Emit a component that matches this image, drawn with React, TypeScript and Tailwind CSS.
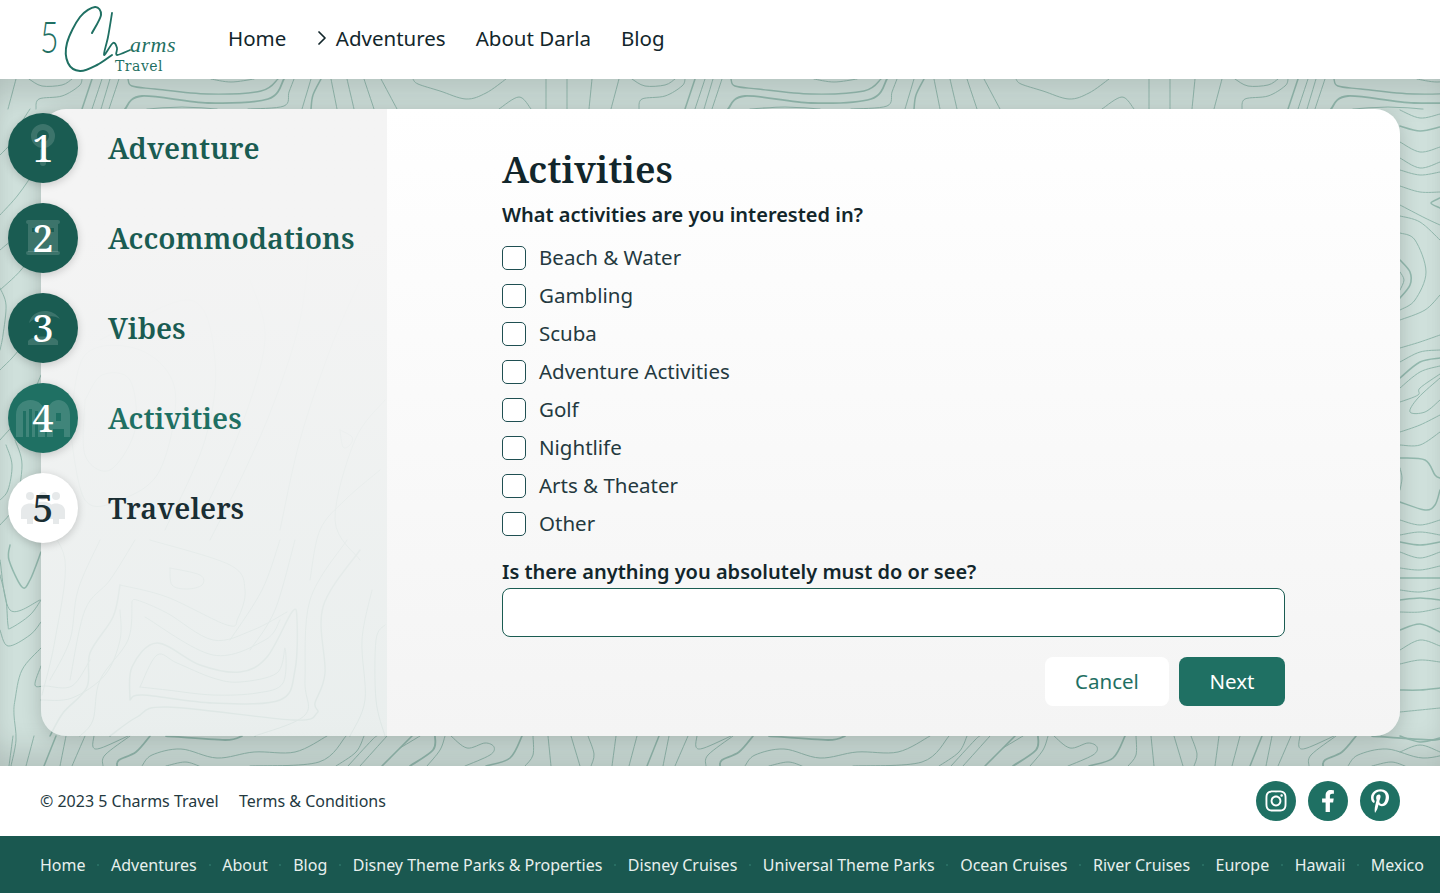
import { ChevronRight } from "lucide-react";
import { FaFacebookF, FaInstagram, FaPinterestP } from "react-icons/fa";

type Contour = [number, number[]];

// catmull-rom through the traced points, page coordinates
const smooth = (p: number[]) => {
  let d = `M${p[0]} ${p[1]}`;
  for (let i = 0; i < p.length - 2; i += 2) {
    const x0 = p[i - 2] ?? p[i];
    const y0 = p[i - 1] ?? p[i + 1];
    const x1 = p[i];
    const y1 = p[i + 1];
    const x2 = p[i + 2];
    const y2 = p[i + 3];
    const x3 = p[i + 4] ?? x2;
    const y3 = p[i + 5] ?? y2;
    d += `C${x1 + (x2 - x0) / 6} ${y1 + (y2 - y0) / 6} ${x2 - (x3 - x1) / 6} ${y2 - (y3 - y1) / 6} ${x2} ${y2}`;
  }
  return d;
};

// repeats every 603px across the page
const tile: Contour[] = [
  [1, [413, 79, 418, 84, 440, 91, 466, 99, 486, 93, 506, 79]],
  [1, [499, 109, 519, 97, 531, 109]],
  [1, [546, 79, 546, 109]],
  [1, [567, 79, 567, 109]],
  [1, [592, 79, 589, 109]],
  [1, [619, 79, 611, 109]],
  [1, [632, 79, 645, 86, 665, 85, 675, 79]],
  [1, [639, 109, 642, 99, 665, 96, 682, 86, 685, 79]],
  [1.5, [685, 109, 695, 79]],
  [1, [695, 109, 705, 79]],
  [1, [704, 109, 713, 79]],
  [1, [712, 109, 722, 79]],
  [1.4, [731, 79, 735, 86, 758, 89, 811, 94, 864, 91, 881, 79]],
  [1.8, [728, 109, 745, 96, 811, 103, 871, 99, 887, 79]],
  [1.2, [750, 109, 785, 107, 820, 109]],
  [1, [814, 79, 834, 82, 857, 79]],
  [1, [851, 109, 887, 106, 892, 92, 897, 79]],
  [1, [905, 109, 914, 79]],
  [1.5, [914, 109, 916, 95, 924, 79]],
  [1, [934, 79, 940, 109]],
  [1, [950, 79, 957, 109]],
  [1, [967, 79, 977, 109]],
  [1, [984, 79, 1000, 109]],
  // bottom band
  [1, [400, 748, 420, 736]],
  [1.8, [410, 766, 433, 750, 435, 736]],
  [1, [427, 766, 440, 750, 445, 736]],
  [1, [451, 736, 467, 748, 485, 743, 494, 747, 490, 755, 465, 766]],
  [1.6, [486, 766, 510, 758, 522, 736]],
  [1, [533, 736, 533, 755, 525, 766]],
  [1, [548, 736, 551, 766]],
  [1, [571, 736, 580, 766]],
  [1, [588, 736, 594, 754, 591, 766]],
  [1, [616, 736, 612, 766]],
  [1, [637, 736, 629, 766]],
  [1.5, [659, 736, 647, 766]],
  [1, [669, 736, 663, 766]],
  [1, [688, 736, 675, 766]],
  [1, [697, 736, 696, 747, 704, 748, 731, 736]],
  [1.8, [720, 766, 722, 760, 739, 752, 753, 736]],
  [1, [706, 766, 708, 755, 733, 736]],
  [1.8, [769, 736, 828, 740, 845, 736]],
  [1, [745, 766, 755, 755, 784, 749, 820, 758, 857, 752, 898, 752, 930, 736]],
  [1, [769, 766, 788, 762, 802, 766]],
  [1, [853, 766, 922, 762, 949, 736]],
  [1, [939, 766, 959, 752, 967, 736]],
  [1, [951, 766, 975, 740, 980, 736]],
  [1, [963, 766, 990, 736]],
  [1.6, [985, 766, 1003, 748, 1015, 736]],
];

// left and right page edges, then what shows through the sidebar
const contours: Contour[] = [
  [1, [0, 155, 12, 142, 20, 125, 30, 109]],
  [1, [0, 215, 18, 195, 35, 170, 41, 155]],
  [1, [0, 250, 20, 232, 40, 205]],
  [1, [0, 290, 25, 265, 41, 230]],
  [1, [0, 288, 6, 305, 3, 335, 0, 350]],
  [1, [0, 370, 22, 345, 41, 300]],
  [1, [0, 440, 25, 410, 41, 375]],
  [1, [6, 445, 12, 465, 8, 490, 0, 500]],
  [1, [15, 440, 22, 465, 15, 505, 0, 525]],
  [1, [0, 560, 10, 610, 40, 600]],
  [1.5, [10, 545, 9, 560, 22, 587, 30, 580, 41, 552]],
  [1, [0, 575, 6, 600, 8, 625, 11, 628, 30, 615, 41, 600]],
  [1, [0, 630, 8, 646, 30, 635, 41, 622]],
  [1, [41, 648, 22, 670, 15, 700, 14, 715, 16, 740, 11, 766]],
  [1, [41, 666, 35, 685, 46, 686, 72, 686, 90, 660]],
  [1, [41, 700, 72, 698, 105, 675, 120, 640, 120, 610]],
  // right edge
  [1, [1400, 110, 1420, 118, 1440, 114]],
  [1.5, [1400, 126, 1420, 131, 1440, 127]],
  [1, [1400, 142, 1420, 152, 1440, 147]],
  [1, [1400, 158, 1420, 168, 1440, 162]],
  [1, [1400, 170, 1420, 175, 1440, 172]],
  [1, [1400, 186, 1420, 192, 1440, 192]],
  [1.5, [1440, 198, 1431, 203, 1440, 208]],
  [1, [1400, 205, 1425, 218, 1440, 225]],
  [1, [1400, 216, 1420, 222, 1440, 240]],
  [1, [1400, 233, 1415, 240, 1426, 272, 1415, 300, 1400, 310]],
  [1.6, [1400, 260, 1410, 272, 1410, 285, 1400, 298]],
  [1, [1400, 272, 1404, 280, 1400, 290]],
  [1, [1400, 320, 1425, 310, 1440, 295]],
  [1, [1400, 348, 1420, 342, 1440, 335]],
  [1, [1400, 362, 1420, 352, 1440, 350]],
  [1.6, [1400, 378, 1420, 362, 1440, 358]],
  [1, [1400, 388, 1420, 372, 1440, 366]],
  [1, [1440, 378, 1418, 398, 1410, 412, 1425, 412, 1440, 400]],
  [1, [1400, 402, 1418, 395, 1420, 388, 1440, 374]],
  [1, [1400, 432, 1420, 425, 1440, 415]],
  [1, [1400, 445, 1420, 445, 1440, 432]],
  [1.5, [1400, 458, 1425, 460, 1435, 475, 1440, 478]],
  [1.5, [1400, 502, 1425, 510, 1435, 505, 1440, 490]],
  [1, [1400, 468, 1402, 478, 1400, 490]],
  [1, [1400, 520, 1420, 525, 1440, 520]],
  [1, [1400, 535, 1420, 532, 1440, 535]],
  [1.5, [1400, 542, 1420, 545, 1440, 542]],
  [1, [1400, 552, 1420, 558, 1440, 552]],
  [1, [1400, 568, 1420, 570, 1440, 566]],
  [1.5, [1400, 578, 1420, 578, 1440, 578]],
  [1, [1400, 590, 1420, 592, 1440, 588]],
  [1.5, [1400, 600, 1420, 598, 1440, 600]],
  [1, [1400, 612, 1420, 612, 1440, 608]],
  [1.5, [1400, 630, 1420, 624, 1440, 632]],
  [1, [1400, 650, 1420, 640, 1440, 646]],
  [1, [1400, 664, 1420, 660, 1440, 662]],
  [1.5, [1400, 690, 1420, 690, 1440, 688]],
  [1, [1400, 712, 1420, 710, 1440, 708]],
  [1.5, [1400, 736, 1420, 742, 1440, 738]],
  [1, [1400, 752, 1420, 745, 1440, 752]],
  // sidebar
  [1, [140, 687, 157, 655, 177, 663, 213, 678, 240, 682, 277, 673, 285, 648, 283, 683, 257, 693, 213, 695, 167, 690, 140, 687]],
  [1.5, [130, 700, 132, 667, 157, 643, 200, 665, 240, 672, 267, 657, 292, 612, 297, 620, 295, 670, 280, 700, 213, 703, 143, 695, 130, 700]],
  [1, [120, 585, 167, 597, 227, 625, 238, 618, 245, 590, 230, 565, 150, 540]],
  [1, [170, 568, 200, 575, 202, 585, 187, 589, 172, 585, 170, 568]],
  [1, [132, 602, 137, 600, 167, 613, 213, 640, 253, 630, 287, 612]],
  [1, [145, 617, 213, 655, 265, 640, 280, 620]],
  [1.5, [120, 585, 113, 617, 90, 653, 87, 687, 63, 713, 50, 736]],
  [1, [132, 602, 128, 640, 100, 680, 93, 720, 80, 736]],
  [1.4, [360, 550, 323, 607, 325, 673, 315, 703, 317, 713, 293, 720, 167, 707, 137, 717, 110, 736]],
  [1, [347, 540, 310, 600, 305, 680, 305, 715, 255, 736]],
  [1, [372, 590, 362, 640, 365, 700, 350, 736]],
  [1, [385, 625, 376, 640, 376, 700, 385, 736]],
  [1, [280, 540, 262, 590, 230, 640]],
  [1, [295, 540, 275, 610, 250, 650]],
  [1, [40, 520, 65, 560, 55, 640, 42, 695]],
  [1, [100, 540, 78, 590, 70, 640, 50, 680]],
  [1, [135, 540, 110, 580, 85, 610, 70, 680]],
  [1, [85, 400, 102, 375, 130, 380, 135, 430, 110, 470, 85, 455, 85, 400]],
  [1, [70, 430, 85, 355, 140, 350, 175, 390, 160, 470, 120, 500, 85, 500, 70, 430]],
  [1, [100, 340, 190, 300, 215, 360, 205, 440, 165, 530]],
  [1, [250, 280, 265, 340, 240, 430, 200, 520]],
  [1, [310, 240, 300, 320, 275, 400, 245, 470, 210, 540]],
  [1, [360, 280, 330, 350, 300, 440, 280, 530]],
  [1, [385, 400, 355, 440, 335, 520, 360, 560]],
  [1, [340, 430, 352, 437, 350, 445, 343, 447, 340, 430]],
  [1, [380, 470, 345, 500, 320, 530, 310, 580]],
];

const TopoBackground = () => (
  <svg
    className="absolute inset-0 h-full w-full"
    viewBox="0 79 1440 687"
    fill="none"
    stroke="#8db5aa"
    strokeLinecap="round"
    opacity="0.9"
    aria-hidden="true"
  >
    {[-603, 0, 603].map((dx) => (
      <g key={dx} transform={`translate(${dx} 0)`}>
        {tile.map(([w, p], i) => (
          <path key={i} d={smooth(p)} strokeWidth={w} />
        ))}
      </g>
    ))}
    {contours.map(([w, p], i) => (
      <path key={i} d={smooth(p)} strokeWidth={w} />
    ))}
  </svg>
);

const Logo = () => (
  <div className="relative h-[79px] w-[148px] shrink-0 text-[#1f7063]" aria-label="5 Charms Travel">
    <svg className="absolute inset-0" width="148" height="79" viewBox="40 0 148 79" fill="none" stroke="currentColor" strokeLinecap="round" strokeLinejoin="round">
      {/* swashes of the logo */}
      <path d={smooth([92, 33, 101, 15, 95, 7, 80, 17, 67, 43, 68, 63, 80, 71, 97, 65, 112, 55])} strokeWidth="2" />
      <path d={smooth([112, 13, 108, 37, 104, 55, 113, 43, 117, 48, 117, 55, 130, 50])} strokeWidth="1.8" />
    </svg>
    <span className="absolute left-0 top-[12px] origin-left scale-x-[0.75] font-['Lato',sans-serif] text-[43px] font-light leading-[50px]">5</span>
    <span className="absolute left-[90px] top-[35px] font-['Liberation_Serif',serif] text-[22px] italic leading-[20px] tracking-[0.5px]">
      arms
    </span>
    <span className="absolute left-[75px] top-[59px] font-['DejaVu_Serif',serif] text-[14px] leading-[14px] tracking-[0.5px]">
      Travel
    </span>
  </div>
);

const Step1Icon = () => (
  <g fill="currentColor">
    <path fillRule="evenodd" d="M35 11a12 12 0 1 1 0 24a12 12 0 1 1 0-24zM35 17a6 6 0 1 0 0 12a6 6 0 1 0 0-12z" />
    <rect x="32" y="35" width="6" height="18" rx="3" />
  </g>
);
const Step2Icon = () => (
  <g fill="currentColor">
    <rect x="18" y="17" width="34" height="4" rx="2" />
    <path fillRule="evenodd" d="M20 21H50V49H20zM24 25V29H30V25zM40 25V29H46V25z" />
    <rect x="18" y="48" width="34" height="4" rx="2" />
  </g>
);
const Step3Icon = () => (
  <g fill="currentColor">
    <path d="M21 30C24 16 44 14 52 26C45 22 40 23 36 26C32 23 26 25 21 30z" />
    <path d="M20 48C24 42 46 42 50 48V52H20z" />
  </g>
);
const Step4Icon = () => (
  <g fill="currentColor" fillRule="evenodd">
    <path d="M8 54V32C8 12 37 12 37 32V54zM15 54H18V28H15zM21 54H24V26H21zM27 54H30V28H27z" />
    <path d="M39 54V32C39 12 62 12 62 32V54H56V46H45V54zM48 30V38H53V30z" />
  </g>
);
const Step5Icon = () => (
  <g fill="currentColor">
    <circle cx="22" cy="23" r="4" />
    <circle cx="35" cy="23" r="4" />
    <circle cx="48" cy="23" r="4" />
    <path d="M13 38C13 28 31 28 31 38V46H25V51H19V46H13z" />
    <path d="M39 38C39 28 57 28 57 38V46H51V51H45V46H39z" />
    <path d="M26 34C26 27 44 27 44 34V46H26z" />
  </g>
);

const steps = [
  { n: 1, label: "Adventure", icon: <Step1Icon />, circle: "bg-[#1a5c52] text-white", iconColor: "text-white/15", text: "text-[#1a5c52]" },
  { n: 2, label: "Accommodations", icon: <Step2Icon />, circle: "bg-[#1a5c52] text-white", iconColor: "text-white/15", text: "text-[#1a5c52]" },
  { n: 3, label: "Vibes", icon: <Step3Icon />, circle: "bg-[#1a5c52] text-white", iconColor: "text-white/15", text: "text-[#1a5c52]" },
  { n: 4, label: "Activities", icon: <Step4Icon />, circle: "bg-[#1f7063] text-white", iconColor: "text-white/15", text: "text-[#1f7063]" },
  { n: 5, label: "Travelers", icon: <Step5Icon />, circle: "bg-white text-[#1a2e33]", iconColor: "text-[#e6e9ea]", text: "text-[#1a2e33]" },
];

const activities = ["Beach & Water", "Gambling", "Scuba", "Adventure Activities", "Golf", "Nightlife", "Arts & Theater", "Other"];

const footerLinks = [
  "Home",
  "Adventures",
  "About",
  "Blog",
  "Disney Theme Parks & Properties",
  "Disney Cruises",
  "Universal Theme Parks",
  "Ocean Cruises",
  "River Cruises",
  "Europe",
  "Hawaii",
  "Mexico",
];

const serif = "font-['Noto_Serif','DejaVu_Serif',serif]";

export default function App() {
  return (
    <div className="flex h-[893px] w-full flex-col overflow-hidden bg-white font-['Noto_Sans',sans-serif] text-[#12262b]">
      <header className="flex h-[79px] shrink-0 items-center pl-10">
        <Logo />
        <nav className="mb-[3px] ml-10 flex items-center gap-[30px] text-[20.5px] leading-[30px]">
          <a>Home</a>
          <a className="flex items-center gap-[2px]">
            <ChevronRight size={24} strokeWidth={1.75} className="-ml-[6.5px]" />
            Adventures
          </a>
          <a>About Darla</a>
          <a>Blog</a>
        </nav>
      </header>

      <main className="relative h-[687px] shrink-0 bg-[#cfe0db] py-[30px] pl-[41px] pr-10">
        <TopoBackground />
        <div className="pointer-events-none absolute inset-0 shadow-[inset_0_30px_30px_-14px_rgba(0,0,0,0.12),inset_0_-30px_30px_-14px_rgba(0,0,0,0.12)]" />
        <div className="relative flex h-[627px] rounded-[25px] shadow-[0_4px_20px_rgba(0,0,0,0.18)]">
          <aside className="flex w-[346px] shrink-0 flex-col gap-5 rounded-l-[25px] bg-gradient-to-b from-[#f4f4f4] from-20% to-[#f0f2f2]/80 pt-1">
            {steps.map((s) => (
              <div key={s.n} className="-ml-[33px] flex items-center gap-[30px]">
                <div className={`relative flex h-[70px] w-[70px] shrink-0 items-center justify-center rounded-full shadow-[0_2px_8px_rgba(0,0,0,0.18)] ${s.circle}`}>
                  <svg className={`absolute inset-0 ${s.iconColor}`} width="70" height="70" viewBox="0 0 70 70" aria-hidden="true">
                    {s.icon}
                  </svg>
                  <span className={`relative -mt-[2px] text-[38px] font-medium leading-none ${serif}`}>{s.n}</span>
                </div>
                <span className={`whitespace-nowrap text-[28.8px] font-semibold leading-[40px] ${serif} ${s.text}`}>{s.label}</span>
              </div>
            ))}
          </aside>

          <section className="flex flex-1 flex-col rounded-r-[25px] bg-gradient-to-b from-white to-[#f4f4f4] px-[115px] pt-[35px]">
            <h1 className={`text-[36.8px] font-semibold leading-[50px] ${serif}`}>Activities</h1>
            <p className="mt-[6px] text-[20px] font-semibold leading-[30px]">What activities are you interested in?</p>
            <div className="mt-[13px] flex flex-col gap-[8px]">
              {activities.map((a) => (
                <label key={a} className="flex h-[30px] items-center gap-[13px] text-[20.5px] text-[#24393f]">
                  <span className="h-6 w-6 rounded-[5px] border border-[#1f4f52] bg-white" />
                  <span className="-mt-[2px]">{a}</span>
                </label>
              ))}
            </div>
            <p className="mt-[18px] text-[20px] font-semibold leading-[30px]">Is there anything you absolutely must do or see?</p>
            <input className="mt-[1px] h-[49px] w-full rounded-lg border border-[#1a5c52] bg-white" />
            <div className="mt-5 flex justify-end gap-[10px]">
              <button className="h-[49px] w-[124px] rounded-lg bg-white text-[20.5px] text-[#1f7063]">Cancel</button>
              <button className="h-[49px] w-[106px] rounded-lg bg-[#1f7063] text-[20.5px] text-white">Next</button>
            </div>
          </section>
        </div>
      </main>

      <div className="flex h-[70px] shrink-0 items-center justify-between px-10 text-[16px] text-[#24393f]">
        <div className="flex gap-[20.5px]">
          <span>© 2023 5 Charms Travel</span>
          <a>Terms &amp; Conditions</a>
        </div>
        <div className="flex gap-3">
          <a className="flex h-10 w-10 items-center justify-center rounded-full bg-[#1f7063] text-white">
            <FaInstagram size={24} />
          </a>
          <a className="flex h-10 w-10 items-center justify-center rounded-full bg-[#1f7063] text-white">
            <FaFacebookF size={22} />
          </a>
          <a className="flex h-10 w-10 items-center justify-center rounded-full bg-[#1f7063] text-white">
            <FaPinterestP size={24} />
          </a>
        </div>
      </div>

      <footer className="flex h-[57px] shrink-0 items-center overflow-hidden whitespace-nowrap bg-[#1a5850] pl-10 text-[16px] text-[#e8f0ee]">
        {footerLinks.map((l, i) => (
          <span key={l} className="flex items-center">
            {i > 0 && <span className="mx-[11.75px] h-[2px] w-[2px] rounded-full bg-[#2c7569]" />}
            {l}
          </span>
        ))}
      </footer>
    </div>
  );
}
